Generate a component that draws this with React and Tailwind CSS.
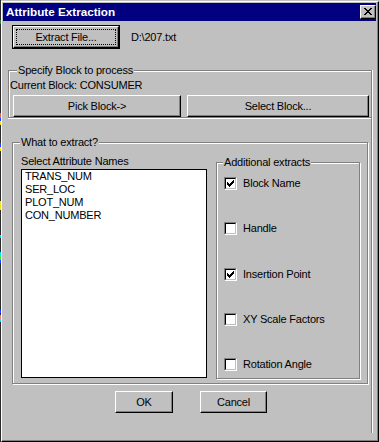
import React from "react";

const raised =
  "border border-t-white border-l-white border-r-black border-b-black shadow-[inset_-1px_-1px_0_#808080]";

function Check({ checked, label, className }) {
  return (
    <div className={`flex items-center h-[13px] ${className}`}>
      <div className="w-[13px] h-[13px] flex border border-t-[#808080] border-l-[#808080] border-r-white border-b-white">
        <div className="flex-1 flex items-center justify-center bg-white border border-t-black border-l-black border-r-[#c0c0c0] border-b-[#c0c0c0]">
          {checked && (
            <svg width="7" height="7" viewBox="0 0 7 7" shapeRendering="crispEdges">
              <path
                fill="#000"
                d="M6 0h1v1h-1z M5 1h2v1h-2z M0 2h1v1h-1z M4 2h3v1h-3z M0 3h2v1h-2z M3 3h3v1h-3z M0 4h5v1h-5z M1 5h3v1h-3z M2 6h1v1h-1z"
              />
            </svg>
          )}
        </div>
      </div>
      <span className="ml-[6px] leading-[13px]">{label}</span>
    </div>
  );
}

export default function App() {
  return (
    <div className="w-[379px] h-[442px] flex bg-[#c0c0c0] overflow-hidden font-['Liberation_Sans',Arial,sans-serif] text-[11px] tracking-[-0.2px] text-black">
      <div className="w-px h-full bg-[#2a2a2a] flex flex-col">
        <div className="mt-[20px] h-[4px] bg-[#2f7f3f]" />
        <div className="mt-[89px] h-[5px] bg-[#e06060]" />
        <div className="h-[3px] bg-[#2040ff]" />
        <div className="h-[4px] bg-[#f0e020]" />
        <div className="mt-[18px] h-[4px] bg-[#2040ff]" />
        <div className="h-[4px] bg-[#f0e020]" />
        <div className="mt-[50px] h-[9px] bg-[#f0e020]" />
        <div className="mt-[25px] h-[3px] bg-[#00e0ff]" />
        <div className="mt-[14px] h-[3px] bg-[#00e0ff]" />
        <div className="h-[5px] bg-[#40e040]" />
        <div className="h-[3px] bg-[#2040ff]" />
        <div className="mt-[47px] h-[3px] bg-[#2040ff]" />
        <div className="mt-[2px] h-[4px] bg-[#e08080]" />
        <div className="h-[3px] bg-[#00e0ff]" />
      </div>
      <div className="w-[378px] h-full flex flex-col pt-px">
        <div className="flex-1 flex flex-col border border-t-white border-l-white border-r-black border-b-black">
          <div className="flex-1 flex flex-col border-r border-b border-[#808080] pt-px pl-px pr-px">
            {/* Title bar */}
            <div className="h-[18px] bg-[#000080] flex items-center justify-between pl-[3px]">
              <span className="text-white font-bold text-[11.7px] tracking-normal leading-none">
                Attribute Extraction
              </span>
              <div className={`w-[16px] h-[14px] bg-[#c0c0c0] flex items-start justify-start pl-[3px] pt-[2px] ${raised}`}>
                <svg width="8" height="7" viewBox="0 0 8 7" shapeRendering="crispEdges">
                  <path
                    fill="#000"
                    d="M0 0h2v1H0z M6 0h2v1H6z M1 1h2v1H1z M5 1h2v1H5z M2 2h4v1H2z M3 3h2v1H3z M2 4h4v1H2z M1 5h2v1H1z M5 5h2v1H5z M0 6h2v1H0z M6 6h2v1H6z"
                  />
                </svg>
              </div>
            </div>

            {/* Body */}
            <div className="flex-1 flex flex-col">
              <div className="flex items-center mt-[4px] ml-[9px]">
                <div className="w-[108px] h-[24px] flex border border-black">
                  <div className={`flex-1 flex p-[2px] ${raised}`}>
                    <div className="flex-1 flex items-center justify-center border border-dotted border-black leading-none">
                      Extract File...
                    </div>
                  </div>
                </div>
                <span className="ml-[11px]">D:\207.txt</span>
              </div>

              <div className="mt-[21px] ml-[5px] w-[364px] h-[363px] flex flex-col border-r border-[#808080] shadow-[1px_0_0_#fff]">
                {/* Specify Block group */}
                <div className="relative h-[48px] flex flex-col pl-px pt-[8px] border-l border-t border-b border-[#808080] shadow-[inset_1px_1px_0_#fff,0_1px_0_#fff]">
                  <span className="absolute left-[8px] top-[-7px] px-px bg-[#c0c0c0] leading-[13px]">
                    Specify Block to process
                  </span>
                  <span className="leading-[13px]">Current Block: CONSUMER</span>
                  <div className="flex mt-[3px] ml-[3px] gap-[6px]">
                    <div className={`w-[168px] h-[22px] flex items-center justify-center ${raised}`}>
                      Pick Block-&gt;
                    </div>
                    <div className={`w-[182px] h-[22px] flex items-center justify-center ${raised}`}>
                      Select Block...
                    </div>
                  </div>
                </div>

                {/* What to extract group */}
                <div className="relative mt-[24px] ml-[4px] w-[356px] h-[242px] flex border border-[#808080] shadow-[inset_1px_1px_0_#fff,1px_1px_0_#fff]">
                  <span className="absolute left-[7px] top-[-7px] px-px bg-[#c0c0c0] leading-[13px]">
                    What to extract?
                  </span>
                  <div className="flex flex-col pl-[8px] pt-[12px]">
                    <span className="leading-[13px]">Select Attribute Names</span>
                    <div className="mt-[1px] w-[186px] h-[209px] flex flex-col border border-black bg-white pl-[3px]">
                      <span className="leading-[13px]">TRANS_NUM</span>
                      <span className="leading-[13px]">SER_LOC</span>
                      <span className="leading-[13px]">PLOT_NUM</span>
                      <span className="leading-[13px]">CON_NUMBER</span>
                    </div>
                  </div>
                  <div className="relative ml-[9px] mt-[19px] w-[144px] h-[217px] flex flex-col pl-[7px] border border-[#808080] shadow-[inset_1px_1px_0_#fff,1px_1px_0_#fff]">
                    <span className="absolute left-[6px] top-[-7px] px-px bg-[#c0c0c0] leading-[13px]">
                      Additional extracts
                    </span>
                    <Check className="mt-[14px]" checked label="Block Name" />
                    <Check className="mt-[32px]" label="Handle" />
                    <Check className="mt-[33px]" checked label="Insertion Point" />
                    <Check className="mt-[32px]" label="XY Scale Factors" />
                    <Check className="mt-[32px]" label="Rotation Angle" />
                  </div>
                </div>

                {/* OK / Cancel */}
                <div className="flex mt-[7px] ml-[107px] gap-[27px]">
                  <div className={`w-[58px] h-[22px] flex items-center justify-center ${raised}`}>OK</div>
                  <div className={`w-[67px] h-[22px] flex items-center justify-center ${raised}`}>Cancel</div>
                </div>
              </div>
            </div>
          </div>
        </div>
      </div>
    </div>
  );
}
